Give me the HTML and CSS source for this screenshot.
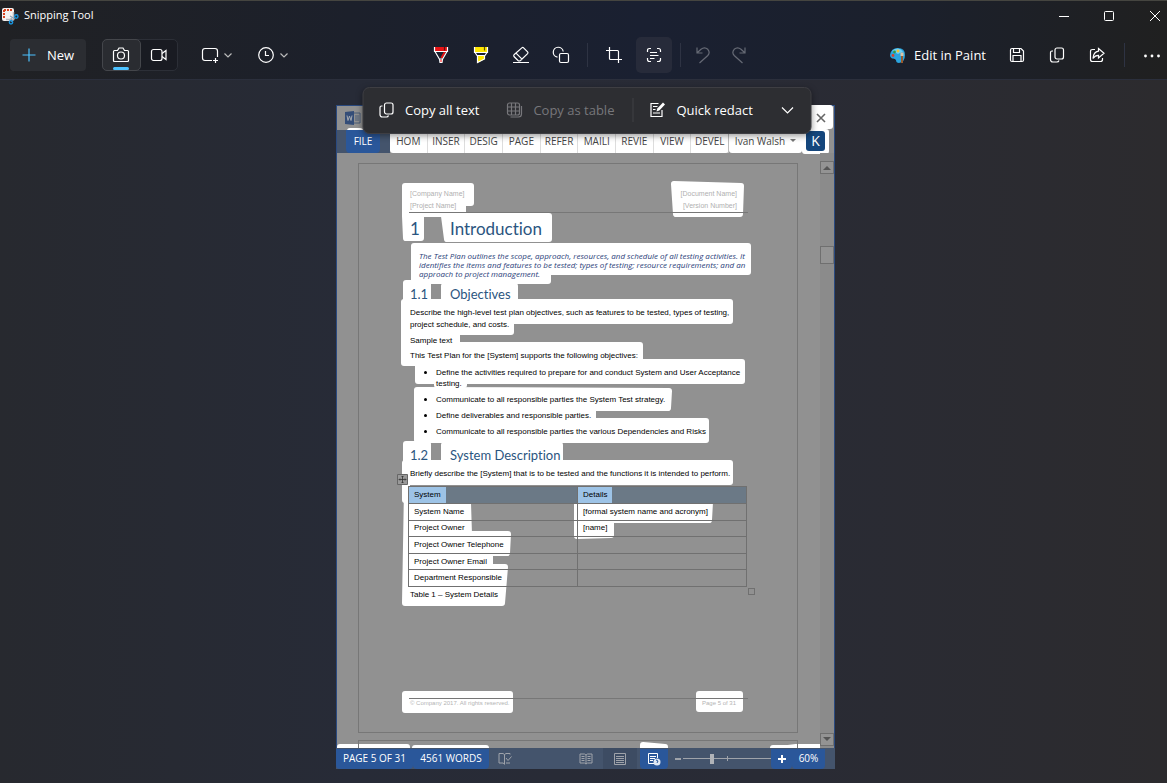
FILE: index.html
```html
<!DOCTYPE html>
<html lang="en">
<head>
<meta charset="utf-8">
<title>Snipping Tool</title>
<link rel="stylesheet" href="styles.css">
</head>
<body>
<header class="app-header">
  <div class="titlebar">
    <svg class="app-icon" width="18" height="18" viewBox="0 0 18 18" aria-hidden="true">
      <rect x="1" y="1" width="12" height="13" rx="2" fill="#f4f1ef"/>
      <path d="M3 3h8M3 3v8" stroke="#d9431e" stroke-width="2" stroke-dasharray="2 1" fill="none"/>
      <path d="M5 12.500h7.500V5" stroke="#b9b9bd" stroke-width="1.500" fill="none"/>
      <path d="M9 9l5 3M10 11l1 4" stroke="#8fa4b4" stroke-width="1.200"/>
      <circle cx="15.300" cy="9.500" r="1.700" fill="none" stroke="#1793dd" stroke-width="1.400"/>
      <circle cx="10" cy="15.300" r="1.700" fill="none" stroke="#1793dd" stroke-width="1.400"/>
    </svg>
    <h1 class="app-name">Snipping Tool</h1>
    <div class="window-buttons">
      <button class="win-btn" aria-label="Minimize"><svg width="12" height="12" viewBox="0 0 12 12"><path d="M1 6.500h10"/></svg></button>
      <button class="win-btn" aria-label="Maximize"><svg width="12" height="12" viewBox="0 0 12 12"><rect x="1.500" y="1.500" width="9" height="9" rx="1"/></svg></button>
      <button class="win-btn" aria-label="Close"><svg width="12" height="12" viewBox="0 0 12 12"><path d="M1 1l10 10M11 1L1 11"/></svg></button>
    </div>
  </div>
  <div class="toolbar">
    <div class="group group-left">
      <button class="new-btn"><svg class="accent" width="14" height="14" viewBox="0 0 14 14"><path d="M7 .5v13M.5 7h13"/></svg>New</button>
      <div class="segmented">
        <button class="seg seg-on" aria-label="Snip" aria-pressed="true"><svg width="18" height="18" viewBox="0 0 18 18"><path d="M2.500 4.500h3l1.500-2.500h4l1.500 2.500h3q1 0 1 1v9q0 1-1 1h-13q-1 0-1-1v-9q0-1 1-1z"/><circle cx="9" cy="9.500" r="3.500"/></svg></button>
        <button class="seg" aria-label="Record"><svg width="18" height="18" viewBox="0 0 18 18"><rect x="1.500" y="3.500" width="10.500" height="11" rx="2"/><path d="M12 7.500l4-3v9l-4-3"/></svg></button>
      </div>
      <button class="drop-btn" aria-label="Snipping mode">
        <svg width="18" height="18" viewBox="0 0 18 18"><path d="M11 14.500H4q-2.500 0-2.500-2.500V5q0-2.500 2.500-2.500h10q2.500 0 2.500 2.500v6M14.500 12v5M12 14.500h5"/></svg>
        <svg class="chev" width="10" height="10" viewBox="0 0 10 10"><path d="M1.500 3.500L5 7l3.500-3.500"/></svg>
      </button>
      <button class="drop-btn" aria-label="Delay">
        <svg width="18" height="18" viewBox="0 0 18 18"><circle cx="9" cy="9" r="7.300"/><path d="M8.500 5v4.500H12"/></svg>
        <svg class="chev" width="10" height="10" viewBox="0 0 10 10"><path d="M1.500 3.500L5 7l3.500-3.500"/></svg>
      </button>
    </div>
    <div class="group group-mid">
      <button class="icon-btn" aria-label="Ballpoint pen"><svg width="18" height="18" viewBox="0 0 18 18"><path d="M2 1h14v4H2z" fill="#e81416" stroke="none"/><path d="M8.500 11.500l3.500-6h2l-3.500 7z" fill="#e81416" stroke="none"/><path d="M2.500 1v4.500h13V1M3 5.500l4.300 7.500h3.400L15 5.500M7.500 13l.5 3.500h2l.5-3.500"/><path d="M12.500 1v3.500" stroke="#5a1010"/><path d="M8 13.500h2v2.500H8z" fill="#ff8080" stroke="none"/></svg></button>
      <button class="icon-btn" aria-label="Highlighter"><svg width="18" height="18" viewBox="0 0 18 18"><path d="M2 1h14v5H2zM5.500 9.500h7.500v3.500l-7 3.500z" fill="#ffe600" stroke="none"/><path d="M2.500 1v5.500h13V1M3 6.500l2 3h8l2-3M5.500 9.500V16.500l7-3.500V9.500"/><path d="M12.500 1v3.500" stroke="#5a5000"/></svg></button>
      <button class="icon-btn" aria-label="Eraser"><svg width="18" height="18" viewBox="0 0 18 18"><path d="M6 14.500L2 10.500q-.7-1 0-1.700L9.800 1.900q1-.8 1.800 0l4 4q.8.9 0 1.800L8.500 14.500q-1.300 1-2.500 0zM4 7.200l6 6M1 16.500h16"/></svg></button>
      <button class="icon-btn" aria-label="Shapes"><svg width="18" height="18" viewBox="0 0 18 18"><path d="M5.500 11.200A5 5 0 1 1 11.200 5.500"/><rect x="7.500" y="7.500" width="9" height="9" rx="1.500"/></svg></button>
      <span class="rule"></span>
      <button class="icon-btn" aria-label="Crop"><svg width="18" height="18" viewBox="0 0 18 18"><path d="M4.500 1v11.500q0 1 1 1H17M1 4.500h11.500q1 0 1 1V17"/></svg></button>
      <button class="icon-btn icon-on" aria-label="Text actions" aria-pressed="true"><svg width="18" height="18" viewBox="0 0 18 18"><path d="M2.500 6V4.500q0-2 2-2H6M12 2.500h1.500q2 0 2 2V6M15.500 12v1.500q0 2-2 2H12M6 15.500H4.500q-2 0-2-2V12M5 6.500h7M5 9.500h8.500M5 12.500h4.500"/></svg></button>
      <span class="rule rule-tight"></span>
      <div class="history">
        <button class="icon-btn" aria-label="Undo" disabled><svg width="18" height="18" viewBox="0 0 18 18"><path d="M3 1.500v5.500h5.500M3.200 6.800L7 3.300Q10.500 .5 13.800 3.300 16.500 6.500 13.800 9.500L5.500 17"/></svg></button>
        <button class="icon-btn" aria-label="Redo" disabled><svg width="18" height="18" viewBox="0 0 18 18"><path d="M15 1.500v5.500H9.500M14.800 6.800L11 3.300Q7.500 .5 4.200 3.300 1.500 6.500 4.200 9.500L12.500 17"/></svg></button>
      </div>
    </div>
    <div class="group group-right">
      <button class="paint-btn">
        <svg width="17" height="17" viewBox="0 0 17 17"><path d="M1 8Q2 1 9 1q7 0 7 7 0 7-6 8-3 0-3-3-1-2-4-1.500Q1 11 1 8z" fill="#2ba4de" stroke="none"/><path d="M3 4Q9-1 14 4.500L9 7z" fill="#6fd0f5" stroke="none"/><circle cx="4" cy="8.500" r="1.400" fill="#d9412b" stroke="none"/><circle cx="5.500" cy="5" r="1.400" fill="#2f9b48" stroke="none"/><circle cx="9" cy="4" r="1.400" fill="#f4c430" stroke="none"/><path d="M13 8v8" stroke="#9a5a2c" stroke-width="2"/><path d="M11.500 5.500h3V9h-3z" fill="#dbc5a8" stroke="none"/></svg>
        Edit in Paint
      </button>
      <button class="icon-btn" aria-label="Save"><svg width="18" height="18" viewBox="0 0 18 18"><path d="M2.500 4q0-1.500 1.500-1.500h9l2.500 2.500v9q0 1.500-1.500 1.500H4q-1.500 0-1.500-1.500zM5.500 2.500v4h6v-4M5 15.500v-6h8v6"/></svg></button>
      <button class="icon-btn" aria-label="Copy"><svg width="18" height="18" viewBox="0 0 18 18"><rect x="7" y="2" width="8.500" height="11" rx="2"/><path d="M5 5H4Q2.500 5 2.500 6.500v7q0 2.500 2.500 2.500h4q1.500 0 2-1.500"/></svg></button>
      <button class="icon-btn" aria-label="Share"><svg width="18" height="18" viewBox="0 0 18 18"><path d="M7 3.500H4.500Q2.500 3.500 2.500 5.500v8q0 2 2 2h8q2 0 2-2V12M10.500 2.500l5.500 4.800-5.500 4.700V9.300Q7 9.300 5 12.500 5.500 5.800 10.500 5.200z"/></svg></button>
      <span class="rule rule-end"></span>
      <button class="more-btn" aria-label="More"><svg width="18" height="18" viewBox="0 0 18 18"><g fill="#fff" stroke="none"><circle cx="2.500" cy="10" r="1.400"/><circle cx="9" cy="10" r="1.400"/><circle cx="15.500" cy="10" r="1.400"/></g></svg></button>
    </div>
  </div>
</header>

<main class="canvas">
  <div class="text-bar" role="toolbar" aria-label="Text actions">
    <button class="text-action"><svg width="18" height="18" viewBox="0 0 18 18"><rect x="7" y="2" width="8.500" height="11" rx="2"/><path d="M5 5H4Q2.500 5 2.500 6.500v7q0 2.500 2.500 2.500h4q1.500 0 2-1.500"/></svg>Copy all text</button>
    <button class="text-action text-table" disabled><svg width="18" height="18" viewBox="0 0 18 18"><rect x="2" y="2" width="12" height="12" rx="2"/><path d="M6 2v12M10 2v12M2 6h12M2 10h12M16 5v8q0 3-3 3H5"/></svg>Copy as table</button>
    <span class="bar-rule"></span>
    <button class="text-action text-redact"><svg width="18" height="18" viewBox="0 0 18 18"><path d="M10 2.500H2.500v13h11V9"/><path d="M4.500 5.500H9M4.500 8.500H7M4.500 12h7"/><path d="M8 10.500l.8-3L14.500 1.500l2 2-5.700 6z" fill="#fff" stroke="none"/></svg>Quick redact</button>
    <button class="text-more" aria-label="Redact options"><svg width="14" height="14" viewBox="0 0 14 14"><path d="M1.500 4.500L7 10l5.500-5.500"/></svg></button>
  </div>

  <section class="shot" aria-label="Captured document">
    <svg class="patches" viewBox="336 105 499 664" preserveAspectRatio="none" aria-hidden="true">
      <g fill="#fff" stroke="#fff" stroke-width="6" stroke-linejoin="round">
        <path d="M811 108H830V126H811zM805 132H826V151H805zM350 131H360V135H350z"/>
        <path d="M405 186H471V203H463V214H421V238H406L405 216z"/>
        <path d="M674 184L741 186 740 214H676z"/>
        <path d="M444 216H549V239H447z"/>
        <path d="M414 246H748V272H548V281H414z"/>
        <path d="M406 283H428V300H406zM444 286H515V300H444z"/>
        <path d="M404 302H730V321H511V332H457V345H640V362H742V381H464V385H437V381H418V363H404z"/>
        <path d="M417 390L669 391 668 408H593V421H706V440H417z"/>
        <path d="M406 444H428V462H406zM444 445H560V462H444z"/>
        <path d="M405 463H730V482H407V500H405z"/>
        <path d="M407 488V503H468L469 534H508L507 553H490V567H505L502 603H405z"/>
        <path d="M577 502H710L709 520H611V535L577 536z"/>
        <path d="M405 694H510V710H405zM699 694H740V709H699z"/>
        <path d="M340 747H407V751H340zM415 748H486V752H415zM643 745L665 747V751H643zM773 748H788L796 747H822V751H773z"/>
      </g>
    </svg>

    <div class="word-title">
      <svg width="16" height="14" viewBox="0 0 16 14" aria-hidden="true"><path d="M8 2h7v10H8M10 5h4M10 7h4M10 9h4" fill="none" stroke="#4a5c78"/><path d="M0 1l9-1v14l-9-1z" fill="#344d78"/><path d="M2 4.500l1 5 1.500-4.500L6 9.500l1-5" fill="none" stroke="#a5a9b0"/></svg>
      <button class="word-close" aria-label="Close document"><svg width="10" height="10" viewBox="0 0 10 10"><path d="M1 1l8 8M9 1L1 9" stroke="#666" stroke-width="1.600"/></svg></button>
    </div>
    <nav class="ribbon" aria-label="Ribbon">
      <button class="file-tab">FILE</button>
      <div class="tabs">
        <button class="tab">HOM</button><button class="tab">INSER</button><button class="tab">DESIG</button><button class="tab">PAGE</button><button class="tab">REFER</button><button class="tab">MAILI</button><button class="tab">REVIE</button><button class="tab">VIEW</button><button class="tab">DEVEL</button>
      </div>
      <button class="user">Ivan Walsh<span class="caret"></span></button>
      <span class="avatar">K</span>
    </nav>

    <div class="workspace">
      <div class="pages">
        <article class="page">
          <div class="page-head">
            <p>[Company Name]<br>[Project Name]</p>
            <p class="right">[Document Name]<br>[Version Number]</p>
          </div>
          <h2 class="h-one"><span>1</span>Introduction</h2>
          <p class="intro">The Test Plan outlines the scope, approach, resources, and schedule of all testing activities. It<br>identifies the items and features to be tested; types of testing; resource requirements; and an<br>approach to project management.</p>
          <h3 class="h-two"><span>1.1</span>Objectives</h3>
          <p class="body first">Describe the high-level test plan objectives, such as features to be tested, types of testing,<br>project schedule, and costs.</p>
          <p class="body">Sample text</p>
          <p class="body">This Test Plan for the [System] supports the following objectives:</p>
          <ul class="list">
            <li>Define the activities required to prepare for and conduct System and User Acceptance<br>testing.</li>
            <li>Communicate to all responsible parties the System Test strategy.</li>
            <li>Define deliverables and responsible parties.</li>
            <li>Communicate to all responsible parties the various Dependencies and Risks</li>
          </ul>
          <h3 class="h-two second"><span>1.2</span>System Description</h3>
          <p class="body brief">Briefly describe the [System] that is to be tested and the functions it is intended to perform.</p>
          <div class="table-box">
            <svg class="anchor" width="11" height="11" viewBox="0 0 11 11" aria-hidden="true"><path d="M.5.5h10v10H.5z" fill="#999" stroke="#666"/><path d="M5.500 2v7M2 5.500h7M4.500 3l1-1 1 1M4.500 8l1 1 1-1M3 4.500l-1 1 1 1M8 4.500l1 1-1 1" fill="none" stroke="#333" stroke-width=".8"/></svg>
            <table class="details">
              <thead><tr><th><span>System</span></th><th><span>Details</span></th></tr></thead>
              <tbody>
                <tr><td>System Name</td><td>[formal system name and acronym]</td></tr>
                <tr><td>Project Owner</td><td>[name]</td></tr>
                <tr><td>Project Owner Telephone</td><td></td></tr>
                <tr><td>Project Owner Email</td><td></td></tr>
                <tr><td>Department Responsible</td><td></td></tr>
              </tbody>
            </table>
            <span class="grip"></span>
          </div>
          <p class="body caption">Table 1 – System Details</p>
          <div class="page-foot"><span>© Company 2017. All rights reserved.</span><span>Page 5 of 31</span></div>
        </article>
        <div class="next-page"></div>
      </div>
      <div class="scrollbar">
        <span class="sb-btn"><svg width="8" height="5" viewBox="0 0 8 5"><path d="M0 5l4-4 4 4z" fill="#555"/></svg></span>
        <span class="sb-thumb"></span>
        <span class="sb-btn sb-down"><svg width="8" height="5" viewBox="0 0 8 5"><path d="M0 0l4 4 4-4z" fill="#555"/></svg></span>
      </div>
    </div>

    <footer class="status">
      <span class="st-text st-page">PAGE 5 OF 31</span>
      <span class="st-text st-words">4561 WORDS</span>
      <svg class="st-proof" width="14" height="14" viewBox="0 0 14 14"><path d="M6.500 2.500L5 1.500H1v9.500h4l1.500 1M6.500 2.500v10M6.500 2.500L8 1.500h4v1M8 11h4M8 6l2 2.500 3.500-4"/></svg>
      <span class="spacer"></span>
      <button class="view-btn" aria-label="Read mode"><svg width="14" height="14" viewBox="0 0 14 14"><path d="M7 3v9M7 3L5.500 2H1v9h4.500L7 12l1.500-1H13V2H8.500zM2.500 4.500h3M2.500 6.500h3M2.500 8.500h3M8.500 4.500h3M8.500 6.500h3M8.500 8.500h3"/></svg></button>
      <button class="view-btn view-print" aria-label="Print layout"><svg width="14" height="14" viewBox="0 0 14 14"><path d="M1.500 1.500h11v11h-11zM3 4.500h8M3 6.500h8M3 8.500h8M3 10.500h8"/></svg></button>
      <button class="view-btn view-web" aria-label="Web layout"><svg width="14" height="14" viewBox="0 0 14 14"><path d="M7 11.500H1.500v-10h9V6M3 4.500h6M3 6.500h5M3 8.500h3"/><circle cx="10" cy="10" r="3.500" fill="#dfe8f4" stroke="none"/><path d="M9 8l2 1-1 2" stroke="#2a579a"/></svg></button>
      <button class="zoom-btn zoom-out" aria-label="Zoom out"><svg width="6" height="8" viewBox="0 0 6 8"><path d="M0 4h6" stroke-width="2"/></svg></button>
      <input class="zoom-range" type="range" min="0" max="100" value="32" aria-label="Zoom">
      <button class="zoom-btn zoom-in" aria-label="Zoom in"><svg width="8" height="8" viewBox="0 0 8 8"><path d="M4 0v8M0 4h8" stroke="#fff" stroke-width="2"/></svg></button>
      <span class="st-text st-zoom">60%</span>
    </footer>
  </section>
</main>
</body>
</html>
```

FILE: styles.css
```css
* { box-sizing: border-box; }
body {
  margin: 0;
  min-height: 100vh;
  display: flex;
  flex-direction: column;
  overflow: hidden;
  font-family: "Open Sans", "Noto Sans", sans-serif;
  color: #fff;
}
h1, h2, h3, p, ul { margin: 0; padding: 0; font-weight: 400; }
button {
  margin: 0; padding: 0; border: 0;
  background: none; color: inherit; font: inherit;
  display: flex; align-items: center; justify-content: center;
}
svg { flex: none; display: block; }
.app-header svg, .text-bar svg, .status svg {
  fill: none; stroke: currentColor; stroke-width: 1.2;
}

/* window header */
.app-header {
  border-top: 1px solid #454540;
  border-bottom: 1px solid #2b2f3c;
  background: linear-gradient(90deg, #202124 0%, #1c202b 30%, #1a2031 55%, #1b202c 78%, #202020 100%);
}
.titlebar { display: flex; align-items: center; height: 30px; padding-left: 1px; }
.titlebar .app-icon { stroke: none; }
.app-name { margin-left: 5px; padding-bottom: 2px; font-size: 11px; line-height: 16px; }
.window-buttons { display: flex; margin-left: auto; margin-right: -11px; }
.win-btn { width: 45px; height: 30px; }
.win-btn:last-child { width: 47px; }
.win-btn svg { stroke-width: 1; }
.toolbar {
  display: grid; grid-template-columns: 1fr auto 1fr; align-items: center;
  height: 48px; padding-left: 10px;
}
.group { display: flex; align-items: center; gap: 4px; }
.new-btn {
  width: 76px; height: 32px; gap: 11px; border-radius: 4px;
  background: #2b2d32; font-size: 13px;
}
.accent { color: #4cc2ff; }
.segmented {
  display: flex; width: 76px; height: 32px; margin-left: 12px;
  border: 1px solid #2c2f37; border-radius: 5px; background: #191b22;
}
.seg { flex: 1; position: relative; }
.seg-on { margin: -1px 0 -1px -1px; border: 1px solid #44464b; border-radius: 5px; background: #2a2c31; }
.seg-on::after {
  content: ""; position: absolute; left: 50%; bottom: 0;
  width: 16px; height: 3px; margin-left: -8px; border-radius: 2px; background: #4cc2ff;
}
.drop-btn { width: 52px; height: 32px; gap: 4px; }
.segmented + .drop-btn { margin-left: 9px; }
.chev { color: #bbb; }
.group-mid { padding-left: 3px; }
.icon-btn { width: 36px; height: 36px; border-radius: 5px; }
.icon-on { background: #272b3a; }
.icon-btn:disabled { color: #666a75; }
.rule { width: 1px; height: 24px; margin: 0 4px; background: #2e3343; }
.rule-tight { margin-right: 0; }
.rule-end { margin-left: 5px; }
.history { display: flex; }
.group-right { justify-content: flex-end; }
.paint-btn { gap: 8px; margin-right: 9px; font-size: 13px; white-space: nowrap; }
.more-btn { width: 30px; height: 36px; margin-left: 4px; }

/* canvas and floating bar */
.canvas {
  flex: 1; position: relative; padding: 25px 0 14px 4px;
  background: linear-gradient(90deg, #27292f 0%, #272b37 30%, #292b35 65%, #2c2b2e 100%);
}
.text-bar {
  position: absolute; z-index: 2; top: 7px; left: 50%; transform: translateX(-50%);
  margin-left: 3px;
  display: flex; align-items: center; width: 449px; height: 47px; padding: 0 12px 2px 14px;
  border: 1px solid #3e3e43; border-radius: 7px;
  background: #2d2e32; box-shadow: 0 2px 6px #0006;
  font-size: 13px;
}
.text-action { gap: 10px; height: 36px; white-space: nowrap; }
.text-table { margin-left: 26px; }
.text-action:disabled { color: #77777b; }
.bar-rule { width: 1px; height: 24px; margin-left: 18px; background: #404145; }
.text-redact { margin-left: 15px; }
.text-more { width: 36px; height: 36px; margin-left: auto; margin-right: -7px; }

/* captured document */
.shot {
  position: relative; isolation: isolate;
  max-width: 499px; margin: 0 auto;
  border: 1px solid #2a4a80; border-bottom: 0;
  background: #919191;
  color: #000;
}
.patches { position: absolute; z-index: -1; top: -1px; left: -1px; width: calc(100% + 2px); height: calc(100% + 1px); }
.word-title { display: flex; align-items: center; height: 24px; padding: 0 4px 0 8px; }
.word-close { width: 18px; height: 20px; margin-left: auto; }
.ribbon { display: flex; height: 23px; font-size: 10px; color: #444; background: linear-gradient(90deg, #44546c 53px, transparent 53px); }
.ribbon button { padding-bottom: 2px; }
.file-tab { width: 34px; margin-left: 9px; border-radius: 0 0 4px 4px; background: #2a579a; color: #fff; }
.tabs { display: flex; flex: 1; margin-left: 10px; border-radius: 0 0 3px 3px; background: #fff; }
.tab { flex: 1 1 0; border-right: 1px solid #ddd; }
.tab:last-child { border-color: #bbb; }
.user { width: 73px; gap: 5px; background: #fff; border-radius: 0 0 3px 3px; white-space: nowrap; }
.caret { border: 3px solid transparent; border-top-color: #777; border-bottom: 0; }
.avatar {
  width: 19px; height: 20px; margin: 1px 9px 0 4px; border-radius: 3px;
  background: #14467c; color: #fff; font-size: 14px; line-height: 20px; text-align: center;
}
.workspace { display: flex; padding-left: 21px; }
.pages { flex: 1; min-width: 0; padding-top: 10px; margin-right: 22px; }
.page {
  border: 1px solid #777; padding: 24px 49px 24px 50px;
  font-family: "Liberation Sans", Arial, sans-serif; font-size: 8px; line-height: 12px;
  white-space: nowrap;
}
.page-head {
  display: flex; justify-content: space-between; padding: 0 11px 0 1px;
  border-bottom: 1px solid #777; color: #b0b0b0; font-size: 7px;
}
.right { text-align: right; }
.h-one, .h-two { display: flex; font-family: Lato, sans-serif; font-variant-ligatures: none; color: #2b5580; padding-left: 1px; }
.h-one { font-size: 17px; line-height: 32px; }
.h-two { font-size: 13px; line-height: 20px; margin-top: 6px; }
.h-one span, .h-two span { width: 40px; }
.second { margin-top: 8px; }
.intro {
  margin-top: 6px; padding-left: 10px; font-size: 8px; line-height: 9px;
  font-family: "Open Sans", sans-serif; font-style: italic; font-weight: 500; color: #1f3c78;
}
.body { margin-top: 3px; padding-left: 1px; }
.first { margin: 3px 0 4px; }
.list { padding-left: 27px; line-height: 11px; }
.list li { margin-top: 5px; list-style: none; position: relative; }
.list li::before { content: ""; position: absolute; left: -12px; top: 4px; width: 3px; height: 3px; border-radius: 50%; background: #000; }
.table-box { position: relative; margin: 6px 1px 0 -1px; }
.anchor { position: absolute; left: -11px; top: -12px; }
.details { width: 100%; height: 101px; border-collapse: collapse; table-layout: fixed; line-height: 12px; }
.details th, .details td { padding: 0 0 0 5px; border: 1px solid #707070; text-align: left; font-weight: 400; }
.details th { padding: 0; background: #6b7986; }
.details th span { display: inline-block; height: 16px; line-height: 16px; padding: 0 5px; background: #9dc3e6; vertical-align: top; }
.grip { position: absolute; right: -8px; bottom: -8px; width: 7px; height: 7px; border: 1px solid #707070; }
.caption { margin-top: 2px; }
.page-foot {
  display: flex; justify-content: space-between; margin-top: 97px; padding: 0 12px 0 1px;
  border-top: 1px solid #777; font-size: 6px; line-height: 9px; color: #b4b4b4;
}
.next-page { height: 8px; margin-top: 7px; border: 1px solid #777; border-bottom: 0; }
.scrollbar { display: flex; flex-direction: column; width: 14px; padding: 8px 0 2px; background: #8b8b8b; }
.sb-btn { display: flex; align-items: center; justify-content: center; height: 13px; border: 1px solid #6f6f6f; background: #939393; }
.sb-thumb { height: 18px; margin-top: 72px; border: 1px solid #6f6f6f; background: #939393; }
.sb-down { margin-top: auto; }

/* status bar */
.status { display: flex; align-items: center; height: 21px; margin: 0 -1px; background: #44546c; color: #9fa3aa; font-size: 10px; white-space: nowrap; }
.status svg { stroke-width: 1; }
.st-text { height: 20px; line-height: 19px; border-radius: 0 0 4px 4px; background: #2a579a; color: #fff; text-align: center; }
.st-page { width: 77px; }
.st-words { width: 76px; }
.st-proof { margin-left: 9px; }
.spacer { flex: 1; }
.view-btn { width: 34px; height: 21px; }
.view-print { background: #3d4c63; }
.view-web { width: 28px; height: 20px; margin-left: 3px; border-radius: 0 0 4px 4px; background: #2a579a; color: #fff; }
.zoom-out { margin-left: 7px; }
.zoom-range {
  -webkit-appearance: none; appearance: none;
  width: 88px; height: 20px; margin: 0 0 0 2px;
  background: linear-gradient(#9fa3aa, #9fa3aa) center / 100% 1px no-repeat, linear-gradient(#9fa3aa, #9fa3aa) center / 1px 5px no-repeat;
}
.zoom-range::-webkit-slider-thumb { -webkit-appearance: none; width: 4px; height: 10px; background: #b0b3b8; }
.zoom-in { width: 21px; height: 20px; border-radius: 0 0 4px 4px; background: #2a579a; }
.st-zoom { width: 33px; margin-right: 10px; }
```
